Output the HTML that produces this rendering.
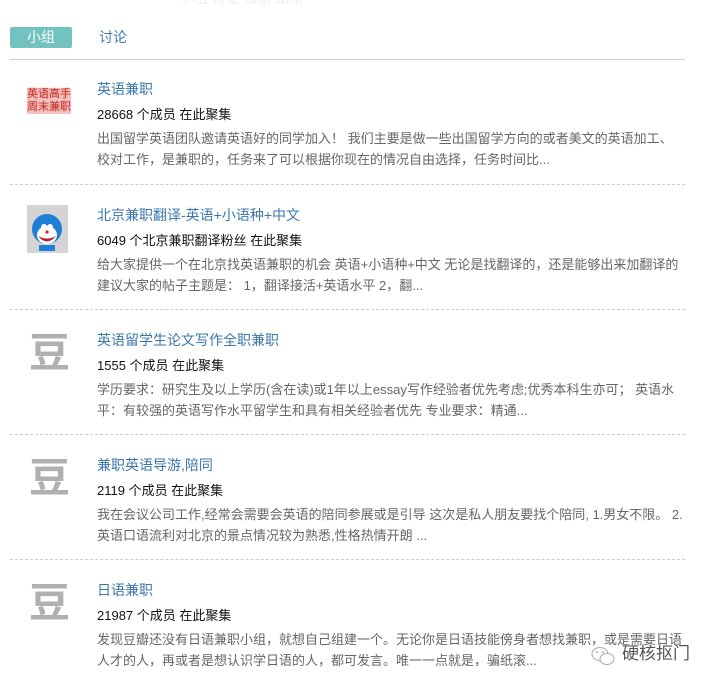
<!DOCTYPE html>
<html><head><meta charset="utf-8"><style>
body{margin:0;width:710px;height:683px;background:#fff;font-family:"Liberation Sans","Noto Sans CJK SC",sans-serif;position:relative;overflow:hidden}
.a{position:absolute;white-space:nowrap}
.tab{left:10px;top:27px;width:62px;height:21px;background:#72c2bf;border-radius:2px;color:#fff;font-size:14px;line-height:21px;text-align:center}
.tab2{left:99px;top:27px;font-size:14px;line-height:21px;color:#3f7ab0}
.hr{left:10px;top:59px;width:675px;height:1px;background:#ccc}
.t{font-size:14px;line-height:18px;color:#3a77ad}
.m{font-size:13px;line-height:18px;color:#111}
.d{font-size:13px;line-height:21px;color:#666;white-space:normal;width:583px}
.sep{left:10px;width:675px;border-top:1px dashed #ccc;height:0}
.dou{font-size:41px;line-height:44px;color:#b0b0b0;font-weight:bold;left:29px}
</style></head><body>
<div class="a" style="left:180px;top:-12px;font-size:14px;color:#eee">小组 讨论 搜索 结果</div>
<div class="a tab">小组</div>
<div class="a tab2">讨论</div>
<div class="a hr"></div>

<div class="a" style="left:27px;top:88px;font-size:11px;line-height:13px;color:#c0392b;background:#f3c4c4;text-shadow:0 0 2px #f08080">英语高手<br>周末兼职</div>
<div class="a t" style="left:97px;top:80px">英语兼职</div>
<div class="a m" style="left:97px;top:106px">28668 个成员 在此聚集</div>
<div class="a d" style="left:97px;top:128px">出国留学英语团队邀请英语好的同学加入！ 我们主要是做一些出国留学方向的或者美文的英语加工、校对工作，是兼职的，任务来了可以根据你现在的情况自由选择，任务时间比...</div>
<div class="a sep" style="top:184px"></div>

<div class="a" style="left:27px;top:205px;width:41px;height:48px;background:#d4d4d4">
<svg width="41" height="48" viewBox="0 0 41 48"><ellipse cx="20" cy="24" rx="15" ry="15" fill="#1e7fd6"/><ellipse cx="20" cy="30" rx="10" ry="9" fill="#fff"/><path d="M11 31 Q20 42 29 31 Q20 36 11 31Z" fill="#c0202a"/><circle cx="17" cy="22" r="3" fill="#fff"/><circle cx="23" cy="22" r="3" fill="#fff"/><circle cx="20" cy="27" r="1.6" fill="#d22"/><rect x="12" y="40" width="16" height="6" fill="#1e7fd6"/></svg></div>
<div class="a t" style="left:97px;top:206px">北京兼职翻译-英语+小语种+中文</div>
<div class="a m" style="left:97px;top:232px">6049 个北京兼职翻译粉丝 在此聚集</div>
<div class="a d" style="left:97px;top:254px">给大家提供一个在北京找英语兼职的机会 英语+小语种+中文 无论是找翻译的，还是能够出来加翻译的建议大家的帖子主题是： 1，翻译接活+英语水平 2，翻...</div>
<div class="a sep" style="top:309px"></div>

<div class="a dou" style="top:331px">豆</div>
<div class="a t" style="left:97px;top:331px">英语留学生论文写作全职兼职</div>
<div class="a m" style="left:97px;top:357px">1555 个成员 在此聚集</div>
<div class="a d" style="left:97px;top:379px">学历要求：研究生及以上学历(含在读)或1年以上essay写作经验者优先考虑;优秀本科生亦可； 英语水平：有较强的英语写作水平留学生和具有相关经验者优先 专业要求：精通...</div>
<div class="a sep" style="top:434px"></div>

<div class="a dou" style="top:456px">豆</div>
<div class="a t" style="left:97px;top:456px">兼职英语导游,陪同</div>
<div class="a m" style="left:97px;top:482px">2119 个成员 在此聚集</div>
<div class="a d" style="left:97px;top:504px;width:600px">我在会议公司工作,经常会需要会英语的陪同参展或是引导 这次是私人朋友要找个陪同, 1.男女不限。 2.<br>英语口语流利对北京的景点情况较为熟悉,性格热情开朗 ...</div>
<div class="a sep" style="top:559px"></div>

<div class="a dou" style="top:581px">豆</div>
<div class="a t" style="left:97px;top:581px">日语兼职</div>
<div class="a m" style="left:97px;top:607px">21987 个成员 在此聚集</div>
<div class="a d" style="left:97px;top:629px;width:600px">发现豆瓣还没有日语兼职小组，就想自己组建一个。无论你是日语技能傍身者想找兼职，或是需要日语<br>人才的人，再或者是想认识学日语的人，都可发言。唯一一点就是，骗纸滚...</div>

<svg class="a" style="left:589px;top:645px" width="28" height="22" viewBox="0 0 28 22"><g fill="none" stroke="#aaa" stroke-width="1"><ellipse cx="11" cy="9" rx="8" ry="6.5"/><ellipse cx="18" cy="14" rx="7" ry="5.5" fill="#fff"/></g><circle cx="8" cy="7" r="1" fill="#aaa"/><circle cx="14" cy="7" r="1" fill="#aaa"/></svg>
<div class="a" style="left:622px;top:643px;font-size:17px;line-height:22px;color:#555;text-shadow:0 0 2px #fff">硬核抠门</div>
</body></html>
